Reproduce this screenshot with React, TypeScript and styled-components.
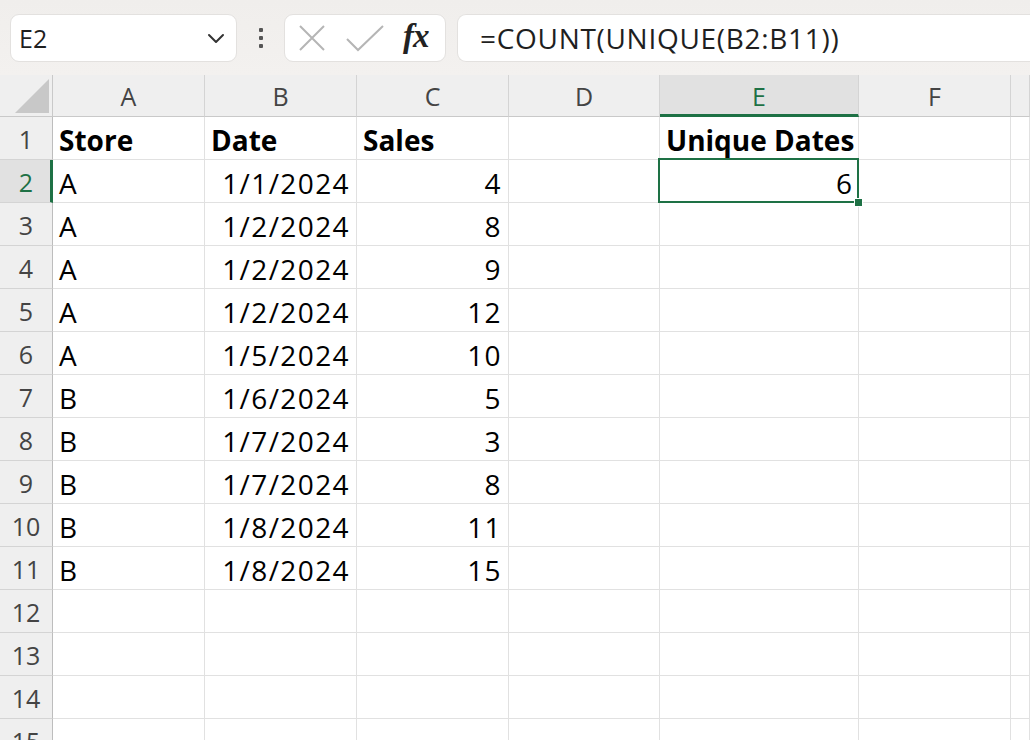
import React from "react";
import styled, { createGlobalStyle, css } from "styled-components";

const GlobalStyle = createGlobalStyle`
  html, body { margin: 0; padding: 0; background: #ffffff; overflow: hidden; }
  body { font-family: "Open Sans", "Noto Sans", sans-serif; }
`;

const GREEN = "#1e7145";
const FONT = `"Open Sans", "Noto Sans", "Liberation Sans", sans-serif`;

const Page = styled.div`
  width: 1030px;
  height: 740px;
  overflow: hidden;
  display: flex;
  flex-direction: column;
`;

const FormulaBar = styled.div`
  height: 75px;
  flex: none;
  display: flex;
  align-items: center;
  padding: 0 0 0 10px;
  background: linear-gradient(#f0eeec, #f3f1ef);
  box-sizing: border-box;
`;

const Pill = styled.div<{ $w: number; $open?: boolean }>`
  height: 48px;
  width: ${(p) => p.$w}px;
  box-sizing: border-box;
  background: #fff;
  border: 1px solid #e3e1df;
  border-radius: 9px;
  display: flex;
  align-items: center;
  font-family: ${FONT};
  font-size: 25px;
  color: #1f1f1f;
  ${(p) =>
    p.$open &&
    css`
      border-right: none;
      border-radius: 9px 0 0 9px;
      flex: 1;
      margin-left: 11px;
    `}
`;

const NameText = styled.span`
  flex: 1;
  padding-left: 8px;
`;

const Chevron = styled.svg`
  width: 24px;
  height: 24px;
  margin-right: 8px;
`;

const Dots = styled.div`
  width: 47px;
  display: flex;
  flex-direction: column;
  align-items: center;
  gap: 4px;
  span {
    width: 4px;
    height: 4px;
    background: #555;
    border-radius: 1px;
  }
`;

const FxIcons = styled.div`
  display: flex;
  align-items: center;
  padding-left: 12px;
  gap: 18px;
`;

const Fx = styled.span`
  font-family: "Liberation Serif", "DejaVu Serif", serif;
  font-style: italic;
  font-weight: bold;
  font-size: 33px;
  color: #222;
  letter-spacing: -1px;
  margin-top: -3px;
`;

const FormulaText = styled.span`
  padding-left: 22px;
  font-size: 28px;
  letter-spacing: 0.7px;
`;

const Sheet = styled.div`
  display: grid;
  grid-template-columns: 53px 152px 152px 152px 151px 199px 152px 1fr;
  grid-auto-rows: 43px;
  grid-template-rows: 42px;
  font-family: ${FONT};
  font-size: 25px;
`;

const Corner = styled.div`
  background: #efefef;
  border-right: 1px solid #c9c9c9;
  border-bottom: 1px solid #c9c9c9;
  position: relative;
  svg { position: absolute; right: 3px; bottom: 3px; }
`;

const ColHead = styled.div<{ $sel?: boolean }>`
  background: ${(p) => (p.$sel ? "#e1e1e1" : "#efefef")};
  color: ${(p) => (p.$sel ? GREEN : "#444")};
  border-right: 1px solid #d4d4d4;
  border-bottom: ${(p) => (p.$sel ? `3px solid ${GREEN}` : "1px solid #c9c9c9")};
  display: flex;
  align-items: center;
  justify-content: center;
  padding-top: ${(p) => (p.$sel ? "2px" : "0")};
  box-sizing: border-box;
`;

const RowHead = styled.div<{ $sel?: boolean }>`
  background: ${(p) => (p.$sel ? "#e1e1e1" : "#efefef")};
  color: ${(p) => (p.$sel ? GREEN : "#444")};
  border-right: ${(p) => (p.$sel ? `3px solid ${GREEN}` : "1px solid #bdbdbd")};
  border-bottom: 1px solid #d4d4d4;
  display: flex;
  align-items: center;
  justify-content: center;
  box-sizing: border-box;
  padding-left: ${(p) => (p.$sel ? "2px" : "0")};
  padding-top: 2px;
`;

const Cell = styled.div<{ $right?: boolean; $bold?: boolean; $active?: boolean; $wide?: boolean }>`
  position: relative;
  border-right: 1px solid #e1e1e1;
  border-bottom: 1px solid #e1e1e1;
  display: flex;
  align-items: center;
  justify-content: ${(p) => (p.$right ? "flex-end" : "flex-start")};
  padding: 3px 6px 0 6px;
  box-sizing: border-box;
  color: #000;
  font-size: 28px;
  font-weight: ${(p) => (p.$bold ? 700 : 400)};
  letter-spacing: ${(p) => (p.$wide ? "1.4px" : "0")};
  white-space: nowrap;
  ${(p) =>
    p.$active &&
    css`
      &::after {
        content: "";
        position: absolute;
        left: -2px;
        top: -2px;
        right: -1px;
        bottom: -1px;
        border: 2px solid ${GREEN};
      }
      &::before {
        content: "";
        position: absolute;
        right: -5px;
        bottom: -5px;
        width: 7px;
        height: 7px;
        background: ${GREEN};
        border: 1px solid #fff;
        z-index: 2;
      }
    `}
`;

const cols = ["A", "B", "C", "D", "E", "F", ""];

const data: [string, string, string][] = [
  ["A", "1/1/2024", "4"],
  ["A", "1/2/2024", "8"],
  ["A", "1/2/2024", "9"],
  ["A", "1/2/2024", "12"],
  ["A", "1/5/2024", "10"],
  ["B", "1/6/2024", "5"],
  ["B", "1/7/2024", "3"],
  ["B", "1/7/2024", "8"],
  ["B", "1/8/2024", "11"],
  ["B", "1/8/2024", "15"],
];

export default function App() {
  const rows: React.ReactNode[] = [];
  for (let r = 1; r <= 15; r++) {
    const d = r >= 2 && r <= 11 ? data[r - 2] : null;
    rows.push(
      <React.Fragment key={r}>
        <RowHead $sel={r === 2}>{r}</RowHead>
        {r === 1 ? (
          <>
            <Cell $bold>Store</Cell>
            <Cell $bold>Date</Cell>
            <Cell $bold>Sales</Cell>
            <Cell />
            <Cell $bold>Unique Dates</Cell>
          </>
        ) : (
          <>
            <Cell>{d ? d[0] : ""}</Cell>
            <Cell $right $wide>{d ? d[1] : ""}</Cell>
            <Cell $right $wide>{d ? d[2] : ""}</Cell>
            <Cell />
            {r === 2 ? <Cell $right $active>6</Cell> : <Cell />}
          </>
        )}
        <Cell />
        <Cell />
      </React.Fragment>
    );
  }

  return (
    <Page>
      <GlobalStyle />
      <FormulaBar>
        <Pill $w={227}>
          <NameText>E2</NameText>
          <Chevron viewBox="0 0 24 24" fill="none" stroke="#333" strokeWidth="2" strokeLinecap="round" strokeLinejoin="round">
            <path d="M5 9l7 7 7-7" />
          </Chevron>
        </Pill>
        <Dots>
          <span />
          <span />
          <span />
        </Dots>
        <Pill $w={162}>
          <FxIcons>
            <svg width="30" height="30" viewBox="0 0 30 30" fill="none" stroke="#b5b5b5" strokeWidth="2">
              <path d="M3 3l24 24M27 3L3 27" />
            </svg>
            <svg width="40" height="30" viewBox="0 0 40 30" fill="none" stroke="#b5b5b5" strokeWidth="2">
              <path d="M2 16l11 11L38 3" />
            </svg>
            <Fx>fx</Fx>
          </FxIcons>
        </Pill>
        <Pill $w={600} $open>
          <FormulaText>=COUNT(UNIQUE(B2:B11))</FormulaText>
        </Pill>
      </FormulaBar>
      <Sheet>
        <Corner>
          <svg width="34" height="34" viewBox="0 0 34 34">
            <path d="M34 0V34H0Z" fill="#c8c8c8" />
          </svg>
        </Corner>
        {cols.map((c, i) => (
          <ColHead key={i} $sel={c === "E"}>
            {c}
          </ColHead>
        ))}
        {rows}
      </Sheet>
    </Page>
  );
}
